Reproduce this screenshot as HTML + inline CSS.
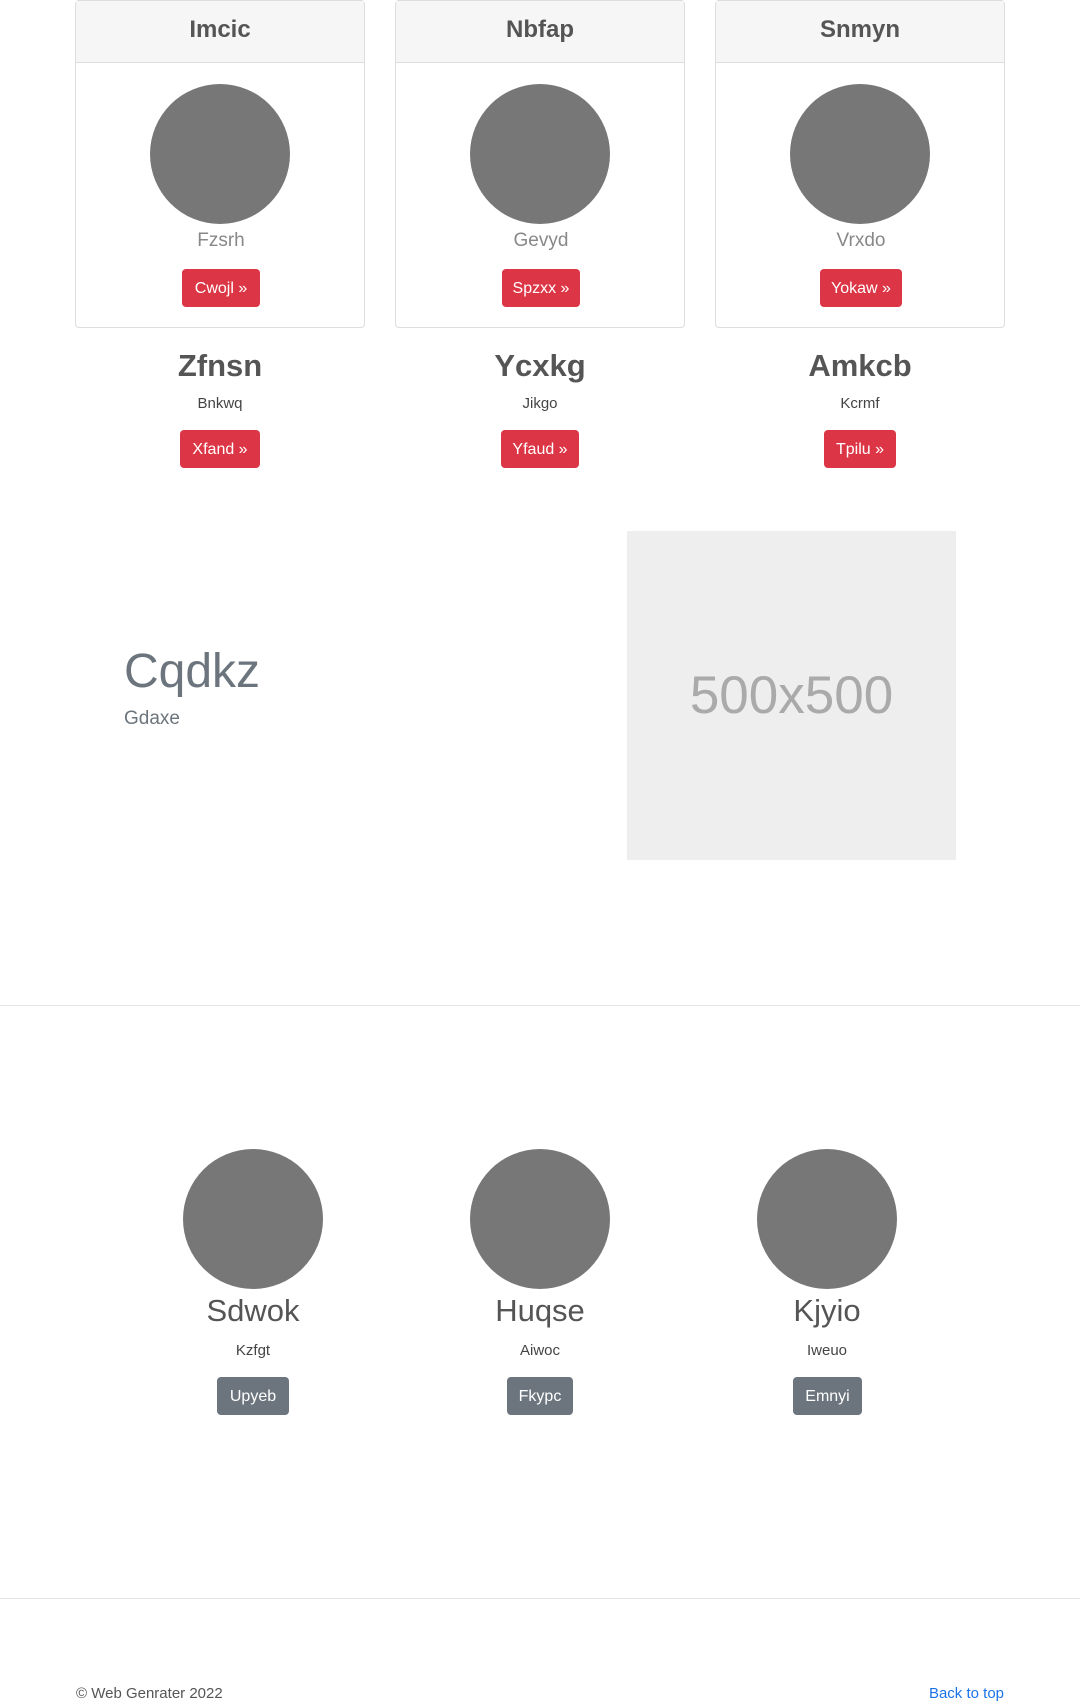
<!DOCTYPE html>
<html><head><meta charset="utf-8"><style>
*{margin:0;padding:0;box-sizing:border-box}
body{width:1080px;height:1704px;position:relative;background:#fff;font-family:"Liberation Sans",sans-serif;color:#444;overflow:hidden}
.a{position:absolute}
.card{position:absolute;top:0;width:290px;height:328px;border:1px solid #ddd;border-radius:4px}
.ch{height:62px;background:#f6f6f6;border-bottom:1px solid #ddd;text-align:center;font-size:24px;line-height:58px;font-weight:bold;color:#555}
.circ{position:absolute;width:140px;height:140px;border-radius:50%;background:#777}
.c{text-align:center}
.btn{position:absolute;color:#fff;background:#dc3545;border-radius:4px;font-size:16px;text-align:center;line-height:40px;height:38px}
.gb{background:#6c757d}
</style></head><body>

<div class="card" style="left:75px"><div class="ch">Imcic</div><div class="circ" style="left:74px;top:83px"></div><div class="a c" style="left:0;width:290px;top:229px;font-size:19px;color:#888">Fzsrh</div><div class="btn" style="left:106px;top:268px;width:78px">Cwojl »</div></div>
<div class="card" style="left:395px"><div class="ch">Nbfap</div><div class="circ" style="left:74px;top:83px"></div><div class="a c" style="left:0;width:290px;top:229px;font-size:19px;color:#888">Gevyd</div><div class="btn" style="left:106px;top:268px;width:78px">Spzxx »</div></div>
<div class="card" style="left:715px"><div class="ch">Snmyn</div><div class="circ" style="left:74px;top:83px"></div><div class="a c" style="left:0;width:290px;top:229px;font-size:19px;color:#888">Vrxdo</div><div class="btn" style="left:104px;top:268px;width:82px">Yokaw »</div></div>

<div class="a c" style="left:75px;width:290px;top:348px;font-size:31px;font-weight:bold;color:#555">Zfnsn</div>
<div class="a c" style="left:75px;width:290px;top:395px;font-size:15px">Bnkwq</div>
<div class="btn" style="left:180px;top:430px;width:80px">Xfand »</div>
<div class="a c" style="left:395px;width:290px;top:348px;font-size:31px;font-weight:bold;color:#555">Ycxkg</div>
<div class="a c" style="left:395px;width:290px;top:395px;font-size:15px">Jikgo</div>
<div class="btn" style="left:501px;top:430px;width:78px">Yfaud »</div>
<div class="a c" style="left:715px;width:290px;top:348px;font-size:31px;font-weight:bold;color:#555">Amkcb</div>
<div class="a c" style="left:715px;width:290px;top:395px;font-size:15px">Kcrmf</div>
<div class="btn" style="left:824px;top:430px;width:72px">Tpilu »</div>

<div class="a" style="left:124px;top:644px;font-size:48px;color:#6c757d">Cqdkz</div>
<div class="a" style="left:124px;top:708px;font-size:19px;color:#6c757d">Gdaxe</div>
<div class="a c" style="left:627px;top:531px;width:329px;height:329px;background:#eee;color:#aaa;font-size:53px;line-height:329px">500x500</div>

<div class="a" style="left:0;top:1005px;width:1080px;height:1px;background:#e5e5e5"></div>

<div class="circ" style="left:183px;top:1149px"></div>
<div class="circ" style="left:470px;top:1149px"></div>
<div class="circ" style="left:757px;top:1149px"></div>
<div class="a c" style="left:103px;width:300px;top:1293px;font-size:31px;color:#555">Sdwok</div>
<div class="a c" style="left:390px;width:300px;top:1293px;font-size:31px;color:#555">Huqse</div>
<div class="a c" style="left:677px;width:300px;top:1293px;font-size:31px;color:#555">Kjyio</div>
<div class="a c" style="left:103px;width:300px;top:1342px;font-size:15px">Kzfgt</div>
<div class="a c" style="left:390px;width:300px;top:1342px;font-size:15px">Aiwoc</div>
<div class="a c" style="left:677px;width:300px;top:1342px;font-size:15px">Iweuo</div>
<div class="btn gb" style="left:217px;top:1377px;width:72px">Upyeb</div>
<div class="btn gb" style="left:507px;top:1377px;width:66px">Fkypc</div>
<div class="btn gb" style="left:793px;top:1377px;width:69px">Emnyi</div>

<div class="a" style="left:0;top:1598px;width:1080px;height:1px;background:#e5e5e5"></div>
<div class="a" style="left:76px;top:1685px;font-size:15px;color:#555">© Web Genrater 2022</div>
<div class="a" style="right:76px;top:1685px;font-size:15px;color:#1a73e8">Back to top</div>
</body></html>
